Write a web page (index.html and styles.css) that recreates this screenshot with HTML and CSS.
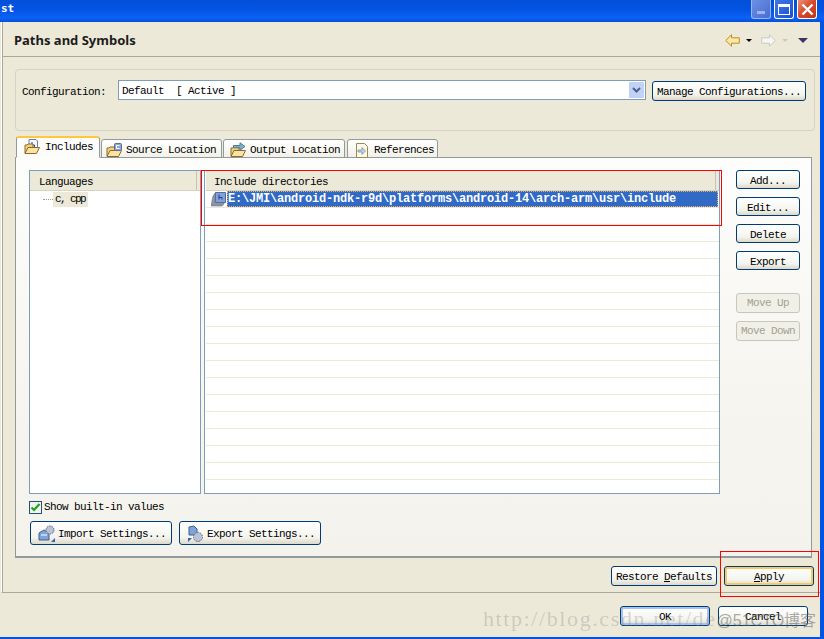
FILE: index.html
```html
<!DOCTYPE html>
<html lang="en">
<head>
    <meta charset="UTF-8">
    <title>Paths and Symbols</title>
    <link rel="stylesheet" href="styles.css">
</head>
<body>
    <div class="window">
        <div class="titlebar">
            <span class="title-text">st</span>
            <div class="win-btns">
                <span class="win-btn win-min"><i></i></span>
                <span class="win-btn win-max"><i></i></span>
                <span class="win-btn win-close">
                    <svg viewBox="0 0 13 13" width="13" height="13"><path d="M1.5 1.5l10 10M11.5 1.5l-10 10" stroke="#fff" stroke-width="2.4"/></svg>
                </span>
            </div>
        </div>

        <div class="client">
            <div class="page">
                <div class="page-head">
                    <h1>Paths and Symbols</h1>
                    <div class="nav-icons">
                        <svg width="15" height="13" viewBox="0 0 15 13"><path d="M.7 6.5L6.5.8v3h7.8v5.4H6.5v3z" fill="#fce9a8" stroke="#c08a1e"/></svg>
                        <span class="tri tri-black"></span>
                        <svg class="nav-fwd" width="15" height="13" viewBox="0 0 15 13"><path d="M14.3 6.5L8.5.8v3H.7v5.4h7.8v3z" fill="#f6f6f2" stroke="#c9c9c5"/></svg>
                        <span class="tri tri-grey"></span>
                        <span class="tri-menu"></span>
                    </div>
                </div>

                <div class="page-body">
                    <div class="config-group">
                        <label class="config-label">Configuration:</label>
                        <div class="combo">
                            <span class="combo-text">Default  [ Active ]</span>
                            <span class="combo-arrow">
                                <svg width="9" height="7" viewBox="0 0 9 7"><path d="M1 1l3.5 3.5L8 1" fill="none" stroke="#4d6185" stroke-width="2"/></svg>
                            </span>
                        </div>
                        <button class="btn btn-manage">Manage Configurations...</button>
                    </div>

                    <div class="tabs">
                        <div class="tab tab-active">
                            <svg class="tab-icon" width="16" height="16" viewBox="0 0 16 16"><use href="#folder-h"/></svg>
                            Includes
                        </div>
                        <div class="tab tab-source">
                            <svg class="tab-icon" width="16" height="16" viewBox="0 0 16 16"><use href="#folder-c"/></svg>
                            Source Location
                        </div>
                        <div class="tab tab-output">
                            <svg class="tab-icon" width="16" height="16" viewBox="0 0 16 16"><use href="#folder-out"/></svg>
                            Output Location
                        </div>
                        <div class="tab tab-refs">
                            <svg class="tab-icon" width="16" height="16" viewBox="0 0 16 16"><use href="#doc-ref"/></svg>
                            References
                        </div>
                    </div>

                    <div class="tab-panel">
                        <div class="tables">
                            <div class="table table-langs">
                                <div class="table-head">Languages</div>
                                <div class="lang-row">
                                    <span class="tree-dots"></span>
                                    <span class="lang-item">c, cpp</span>
                                </div>
                            </div>

                            <div class="table table-dirs">
                                <div class="table-head">Include directories</div>
                                <div class="dir-row dir-row-first">
                                    <svg class="dir-icon" width="16" height="16" viewBox="0 0 16 16">
                                        <path d="M0 15l2-10 2-3h9v11l-2 2z" fill="#8a93a8" stroke="#6b7388" stroke-width=".6"/>
                                        <path d="M4.5 1.5h10v10h-10z" fill="#7fa2de" stroke="#5a6c90"/>
                                        <path d="M8 3.5v5M8 6.5h3v2" fill="none" stroke="#1f3f80"/>
                                    </svg>
                                    <span class="dir-sel">E:\JMI\android-ndk-r9d\platforms\android-14\arch-arm\usr\include</span>
                                </div>
                                <div class="dir-row"></div>
                                <div class="dir-row"></div>
                                <div class="dir-row"></div>
                                <div class="dir-row"></div>
                                <div class="dir-row"></div>
                                <div class="dir-row"></div>
                                <div class="dir-row"></div>
                                <div class="dir-row"></div>
                                <div class="dir-row"></div>
                                <div class="dir-row"></div>
                                <div class="dir-row"></div>
                                <div class="dir-row"></div>
                                <div class="dir-row"></div>
                                <div class="dir-row"></div>
                                <div class="dir-row"></div>
                                <div class="dir-row"></div>
                                <div class="dir-row"></div>
                            </div>

                            <div class="side-btns">
                                <button class="btn btn-side">Add...</button>
                                <button class="btn btn-side">Edit...</button>
                                <button class="btn btn-side">Delete</button>
                                <button class="btn btn-side">Export</button>
                                <button class="btn btn-side btn-disabled btn-gap">Move Up</button>
                                <button class="btn btn-side btn-disabled">Move Down</button>
                            </div>
                        </div>

                        <div class="check-row">
                            <span class="checkbox">
                                <svg width="11" height="11" viewBox="0 0 11 11"><path d="M1.5 5.5L4 8l5.500-6" fill="none" stroke="#21a121" stroke-width="2.2"/></svg>
                            </span>
                            Show built-in values
                        </div>

                        <div class="settings-btns">
                            <button class="btn btn-settings">
                                <svg width="18" height="18" viewBox="0 0 18 18"><use href="#import-ico"/></svg>
                                Import Settings...
                            </button>
                            <button class="btn btn-settings">
                                <svg width="18" height="18" viewBox="0 0 18 18"><use href="#export-ico"/></svg>
                                Export Settings...
                            </button>
                        </div>
                    </div>

                    <div class="defaults-row">
                        <button class="btn btn-restore">Restore <u>D</u>efaults</button>
                        <button class="btn btn-apply"><u>A</u>pply</button>
                    </div>
                </div>
            </div>

            <div class="footer">
                <button class="btn btn-ok">OK</button>
                <button class="btn btn-cancel">Cancel</button>
            </div>
        </div>

        <!-- annotations drawn on top of the screenshot -->
        <div class="mark mark-dirs"></div>
        <div class="mark mark-apply"></div>
        <div class="watermark">http://blog.csdn.net/de<span class="wm-tail">@51CTO博客</span></div>
    </div>

    <svg class="defs" width="0" height="0">
        <defs>
            <g id="folder-open">
                <path d="M1 14V6h2l1-1h5v9z" fill="#f6cf7c" stroke="#8a6a2c"/>
                <path d="M1 14.5l3-6h11.5l-3 6z" fill="#fde3a3" stroke="#8a6a2c"/>
            </g>
            <g id="folder-h">
                <path d="M5 .5h7L13.5 2v8.5H5z" fill="#f8f8ff" stroke="#6d7ea8"/>
                <path d="M8 3v5M8 6h2.5v2" fill="none" stroke="#2a4c90"/>
                <use href="#folder-open"/>
            </g>
            <g id="folder-c">
                <use href="#folder-open"/>
                <rect x="8.5" y="1.5" width="7" height="7" rx="1" fill="#8da6d8" stroke="#5a6c90"/>
                <path d="M13.5 3.5h-3v3h3" fill="none" stroke="#fff"/>
            </g>
            <g id="folder-out">
                <use href="#folder-open"/>
                <path d="M3.5 3.5H10V.8l5 3.7-5 3.7V5.8H3.5z" fill="#7fb0c4" stroke="#4d7d94"/>
            </g>
            <g id="doc-ref">
                <path d="M2.5 1.5h8l3 3v11h-11z" fill="#fdf9e8" stroke="#9c8a4a"/>
                <path d="M4 8h4V5.5L11.5 9 8 12.5V10H4z" fill="#c3d0e6" stroke="#6f86aa" stroke-width=".7"/>
            </g>
            <g id="import-ico">
                <path d="M1 8l5-3 5 3v7H1z" fill="#7fa4d8" stroke="#3f5f98"/>
                <path d="M3 10h6" stroke="#fff"/>
                <circle cx="12" cy="5" r="4" fill="#b9c3d4" stroke="#54648a" stroke-dasharray="1.5 1"/>
                <path d="M17 13v4h-4z" fill="#2a64b8"/>
            </g>
            <g id="export-ico">
                <path d="M2 2l5-1 3 3v6H2z" fill="#7fa4d8" stroke="#3f5f98"/>
                <circle cx="11" cy="12" r="4.5" fill="#b9c3d4" stroke="#54648a" stroke-dasharray="1.5 1"/>
                <path d="M1 13h4l-4 4z" fill="#2a64b8"/>
            </g>
        </defs>
    </svg>
</body>
</html>
```

FILE: styles.css
```css
* {
    margin: 0;
    padding: 0;
    box-sizing: border-box;
}

body {
    font-family: "Liberation Mono", monospace;
    font-size: 11px;
    letter-spacing: -0.6px;
    color: #000;
    background: #ece9d8;
}

.window {
    position: relative;
    width: 824px;
    height: 639px;
    overflow: hidden;
    display: flex;
    flex-direction: column;
    background: #0054e3;
}

.titlebar {
    height: 22px;
    flex: none;
    display: flex;
    align-items: flex-start;
    justify-content: space-between;
    background: linear-gradient(180deg, #0250d8 0%, #0454e4 45%, #0a62f4 80%, #0550dc 100%);
}

.title-text {
    font-family: "DejaVu Sans Mono", monospace;
    font-size: 11px;
    font-weight: bold;
    letter-spacing: 0;
    line-height: 18px;
    color: #fff;
    padding-left: 1px;
}

.win-btns {
    display: flex;
    gap: 3px;
    margin-right: 7px;
}

.win-btn {
    width: 20px;
    height: 19px;
    border: 1px solid #fff;
    border-top: none;
    border-radius: 0 0 3px 3px;
    display: flex;
    align-items: center;
    justify-content: center;
    background: linear-gradient(135deg, #3c78ea, #1c50d0);
}

.win-min {
    border-color: #9db4ec;
    background: linear-gradient(135deg, #6c90e4, #4a6cd0);
    align-items: flex-end;
    padding-bottom: 4px;
}

.win-min i {
    width: 8px;
    height: 3px;
    background: #9db4ec;
}

.win-max i {
    width: 12px;
    height: 11px;
    border: 1px solid #fff;
    border-top-width: 3px;
}

.win-close {
    background: linear-gradient(135deg, #e89478, #d8452a 50%, #c03810);
}

.client {
    flex: 1;
    margin-right: 4px;
    margin-bottom: 2px;
    background: #ece9d8;
    display: flex;
    flex-direction: column;
}

.page {
    flex: 1;
    border-left: 1px solid #fff;
    border-bottom: 1px solid #aca899;
    margin-left: 1px;
    box-shadow: -1px 0 0 #ece9d8, inset 1px 0 0 #aca899;
    display: flex;
    flex-direction: column;
}

.page-head {
    height: 35px;
    flex: none;
    margin-left: 1px;
    border-bottom: 1px solid #aca899;
    display: flex;
    align-items: center;
    justify-content: space-between;
    padding: 1px 12px 0 11px;
}

.page-head h1 {
    font-family: "Noto Sans", sans-serif;
    font-size: 13px;
    font-weight: bold;
    letter-spacing: 0;
    color: #1c1c1c;
}

.nav-icons {
    display: flex;
    align-items: center;
    padding-top: 2px;
}

.tri {
    width: 0;
    height: 0;
    margin-left: 6px;
    border-left: 3px solid transparent;
    border-right: 3px solid transparent;
    border-top: 3px solid #000;
}

.tri-grey {
    border-top-color: #c9c9c5;
}

.nav-fwd {
    margin-left: 9px;
}

.tri-menu {
    width: 0;
    height: 0;
    margin-left: 10px;
    border-left: 5px solid transparent;
    border-right: 5px solid transparent;
    border-top: 5px solid #3c3468;
}

.page-body {
    flex: 1;
    padding: 12px 5px 0 13px;
    display: flex;
    flex-direction: column;
}

.config-group {
    height: 62px;
    flex: none;
    border: 1px solid #d5d3c2;
    border-radius: 4px;
    display: flex;
    align-items: flex-start;
    padding: 10px 8px 0 6px;
}

.config-label {
    width: 96px;
    line-height: 24px;
}

.combo {
    width: 528px;
    height: 20px;
    border: 1px solid #7f9db9;
    background: #fff;
    display: flex;
    align-items: center;
    justify-content: space-between;
    padding: 0 1px 0 3px;
}

.combo-text {
    white-space: pre;
    padding-top: 1px;
}

.combo-arrow {
    width: 15px;
    height: 16px;
    border-radius: 1px;
    background: #c1d2f6;
    display: flex;
    align-items: center;
    justify-content: center;
}

.btn {
    font-family: inherit;
    font-size: inherit;
    letter-spacing: inherit;
    color: #000;
    border: 1px solid #003c74;
    border-radius: 3px;
    background: linear-gradient(180deg, #fff 0%, #f4f4ee 70%, #dcd8ca 100%);
    white-space: nowrap;
    padding-top: 1px;
}

.btn-manage {
    width: 154px;
    height: 20px;
    margin-left: 6px;
    margin-top: 1px;
}

.tabs {
    height: 22px;
    flex: none;
    margin-top: 5px;
    padding-left: 1px;
    display: flex;
    align-items: flex-end;
    position: relative;
    z-index: 1;
    margin-bottom: -1px;
}

.tab {
    height: 19px;
    display: flex;
    align-items: center;
    gap: 4px;
    padding-left: 4px;
    padding-top: 2px;
    margin-right: 1px;
    border: 1px solid #919b9c;
    border-radius: 3px 3px 0 0;
    background: linear-gradient(180deg, #fff, #f2f1e8);
}

.tab-active {
    width: 84px;
    height: 22px;
    gap: 5px;
    border-top: 2px solid #ffc73c;
    border-bottom-color: #fdfdfb;
    background: #fcfcfb;
    padding-left: 7px;
    padding-top: 0;
    padding-bottom: 1px;
}

.tab-source {
    width: 121px;
}

.tab-output {
    width: 122px;
    padding-left: 6px;
}

.tab-refs {
    width: 91px;
    margin-left: 1px;
    padding-left: 6px;
}

.tab-icon {
    flex: none;
}

.tab-panel {
    width: 797px;
    height: 401px;
    flex: none;
    border: 1px solid #919b9c;
    border-bottom: 2px solid #919b9c;
    background: linear-gradient(180deg, #fdfdfc 0%, #f6f5f0 60%, #f3f2ec 100%);
    padding: 12px 0 0 13px;
}

.tables {
    display: flex;
    align-items: flex-start;
}

.table {
    height: 324px;
    border: 1px solid #7f9db9;
    background: #fff;
    overflow: hidden;
}

.table-langs {
    width: 172px;
}

.table-dirs {
    width: 516px;
    margin-left: 3px;
    padding-left: 1px;
}

.table-head {
    height: 20px;
    line-height: 22px;
    background: #ece9d8;
    border-bottom: 1px solid #d5d3c2;
    padding-left: 8px;
    box-shadow: inset -3px 0 0 #ece9d8, inset -4px 0 0 #c7c5b2;
}

.table-langs .table-head {
    padding-left: 9px;
}

.lang-row {
    height: 16px;
    display: flex;
    align-items: center;
    padding-left: 13px;
}

.tree-dots {
    width: 10px;
    border-top: 1px dotted #999;
}

.lang-item {
    letter-spacing: -1.6px;
    background: #ece9d8;
    padding: 0 3px 0 2px;
    line-height: 15px;
}

.dir-row {
    height: 17px;
    border-bottom: 1px solid #ece9d8;
}

.dir-row-first {
    display: flex;
    align-items: center;
    padding-left: 5px;
}

.dir-icon {
    flex: none;
}

.dir-sel {
    flex: 1;
    height: 16px;
    background: #316ac5;
    color: #fff;
    font-size: 12px;
    font-weight: bold;
    letter-spacing: -0.2px;
    line-height: 17px;
    padding-left: 1px;
    white-space: nowrap;
    outline: 1px dotted #e8b070;
    outline-offset: -1px;
    margin-right: 1px;
}

.side-btns {
    display: flex;
    flex-direction: column;
    gap: 8px;
    margin-left: 16px;
}

.btn-side {
    width: 64px;
    height: 19px;
    padding-top: 2px;
}

.btn-disabled {
    height: 20px;
    padding-top: 0;
    border-color: #c9c7ba;
    color: #a3a18f;
    background: #f1f0e8;
}

.btn-gap {
    margin-top: 15px;
}

.check-row {
    display: flex;
    align-items: center;
    gap: 2px;
    height: 14px;
    margin-top: 6px;
    line-height: 17px;
}

.checkbox {
    width: 13px;
    height: 13px;
    border: 1px solid #1c5180;
    background: #f4f4ec;
    display: flex;
    align-items: center;
    justify-content: center;
}

.settings-btns {
    display: flex;
    gap: 7px;
    margin-top: 7px;
    padding-left: 1px;
}

.btn-settings {
    width: 142px;
    height: 24px;
    display: flex;
    align-items: center;
    gap: 2px;
    padding: 1px 0 0 7px;
}

.defaults-row {
    display: flex;
    justify-content: flex-end;
    gap: 7px;
    margin-top: 8px;
    padding-right: 1px;
}

.btn-restore {
    width: 106px;
    height: 20px;
}

.btn-apply {
    width: 90px;
    height: 20px;
    box-shadow: inset 0 0 0 2px #fbc761;
}

.footer {
    height: 44px;
    flex: none;
    display: flex;
    justify-content: flex-end;
    gap: 8px;
    padding: 13px 12px 0 0;
}

.btn-ok,
.btn-cancel {
    width: 90px;
    height: 20px;
}

.btn-ok {
    box-shadow: inset 0 0 0 2px #a9c3ef;
}

.mark {
    position: absolute;
    border: 1px solid #f00;
}

.mark-dirs {
    left: 201px;
    top: 170px;
    width: 521px;
    height: 56px;
}

.mark-apply {
    left: 720px;
    top: 551px;
    width: 99px;
    height: 46px;
}

.watermark {
    position: absolute;
    left: 483px;
    top: 606px;
    font-family: "Liberation Serif", serif;
    font-size: 22px;
    letter-spacing: 1.6px;
    color: rgba(120, 120, 120, 0.28);
    white-space: nowrap;
}

.wm-tail {
    font-family: "Liberation Sans", "Noto Sans CJK SC", sans-serif;
    font-size: 16px;
    letter-spacing: 0;
    color: rgba(90, 90, 90, 0.5);
}

.defs {
    position: absolute;
}
```
